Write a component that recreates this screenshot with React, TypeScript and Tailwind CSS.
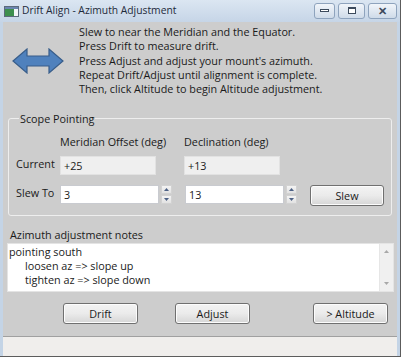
import React from 'react';

const font = { fontFamily: '"Open Sans", "Noto Sans", sans-serif' };

function Arrow() {
  return (
    <svg width="52" height="26" viewBox="0 0 52 26">
      <path
        d="M1 13 L15 1 L15 8 L37 8 L37 1 L51 13 L37 25 L37 18 L15 18 L15 25 Z"
        fill="#4f81bd"
        stroke="#385d8a"
        strokeWidth="1.2"
        strokeLinejoin="miter"
      />
    </svg>
  );
}

function WinButton({ w, children }: { w: string; children: React.ReactNode }) {
  return (
    <div className={`${w} h-[16px] rounded-[3px] border border-[#8ea3bd] bg-gradient-to-b from-[#f1f5fa] to-[#cfdbe9] flex items-center justify-center`}>
      {children}
    </div>
  );
}

function Spinner() {
  return (
    <div className="w-[11px] h-[19px] flex flex-col gap-[1px]">
      <div className="flex-1 bg-gradient-to-b from-[#f4f4f4] to-[#e2e2e2] border border-[#d2d2d2] flex items-center justify-center">
        <svg width="5" height="3" viewBox="0 0 5 3"><path d="M0 3 L2.5 0 L5 3 Z" fill="#4d6185" /></svg>
      </div>
      <div className="flex-1 bg-gradient-to-b from-[#f4f4f4] to-[#e2e2e2] border border-[#d2d2d2] flex items-center justify-center">
        <svg width="5" height="3" viewBox="0 0 5 3"><path d="M0 0 L2.5 3 L5 0 Z" fill="#4d6185" /></svg>
      </div>
    </div>
  );
}

function Btn({ label, w = 'w-[75px]' }: { label: string; w?: string }) {
  return (
    <div className={`${w} h-[21px] rounded-[3px] border border-[#707070] bg-gradient-to-b from-[#f3f3f3] via-[#ebebeb] to-[#d6d6d6] shadow-[inset_0_0_0_1px_#fcfcfc] flex items-center justify-center text-[10.8px] text-[#1a1a1a]`}>
      {label}
    </div>
  );
}

export default function App() {
  return (
    <div className="w-[403px] h-[358px] bg-white" style={font}>
      <div className="w-[401px] h-[357px] flex flex-col bg-[#c4d4e6] border-r border-b border-[#5c5c5c]">
        {/* title bar */}
        <div className="h-[22px] flex items-center bg-gradient-to-b from-[#dbe6f2] to-[#c6d5e7] pl-[4px] pr-[3px]">
          <svg width="15" height="11" viewBox="0 0 15 11">
            <rect x="0.5" y="0.5" width="14" height="10" fill="#f4f6f8" stroke="#5c6a7c" />
            <rect x="1" y="1" width="9" height="9" fill="#3e8f4e" />
            <rect x="1" y="1" width="13" height="2" fill="#6a86b0" />
          </svg>
          <span className="ml-[3px] text-[10.3px] text-[#1e2a3a]">Drift Align - Azimuth Adjustment</span>
          <div className="ml-auto flex gap-[3px] items-center -mt-[1px]">
            <WinButton w="w-[21px]">
              <div className="w-[9px] h-[3px] border border-[#3c4a5c] bg-white" />
            </WinButton>
            <WinButton w="w-[27px]">
              <div className="w-[8px] h-[7px] border border-[#3c4a5c] border-t-2 bg-white" />
            </WinButton>
            <WinButton w="w-[29px]">
              <span className="text-[11px] leading-none text-[#3c4a5c] font-bold">✕</span>
            </WinButton>
          </div>
        </div>

        {/* body */}
        <div className="flex-1 mx-[3px] flex flex-col bg-[#cdcdcd] text-[10.8px] text-[#1a1a1a]">
          <div className="flex items-center pt-[3px] pl-[9px]">
            <Arrow />
            <div className="ml-[15px] leading-[14.3px]">
              <div>Slew to near the Meridian and the Equator.</div>
              <div>Press Drift to measure drift.</div>
              <div>Press Adjust and adjust your mount's azimuth.</div>
              <div>Repeat Drift/Adjust until alignment is complete.</div>
              <div>Then, click Altitude to begin Altitude adjustment.</div>
            </div>
          </div>

          <fieldset className="mt-[15px] ml-[5px] w-[384px] border border-[#eeeeee] rounded-[3px] pl-[7px] pb-[9px]">
            <legend className="ml-[3px] px-[1px] leading-[15px]">Scope Pointing</legend>
            <div className="mt-[8px] flex leading-[15px]">
              <div className="w-[44px]" />
              <div className="w-[124px]">Meridian Offset (deg)</div>
              <div>Declination (deg)</div>
            </div>
            <div className="mt-[7px] flex items-start">
              <div className="w-[44px] leading-[15px]">Current</div>
              <div className="w-[96px] h-[19px] bg-[#efefef] border border-[#e2e2e2] flex items-center pl-[3px]">+25</div>
              <div className="w-[28px]" />
              <div className="w-[96px] h-[19px] bg-[#efefef] border border-[#e2e2e2] flex items-center pl-[3px]">+13</div>
            </div>
            <div className="mt-[10px] flex items-start">
              <div className="w-[44px] leading-[15px]">Slew To</div>
              <div className="w-[99px] h-[19px] bg-white border border-[#c9cbd0] flex items-center pl-[3px]">3</div>
              <div className="ml-[2px]"><Spinner /></div>
              <div className="ml-[13px] w-[99px] h-[19px] bg-white border border-[#c9cbd0] flex items-center pl-[3px]">13</div>
              <div className="ml-[2px]"><Spinner /></div>
              <div className="ml-[13px]"><Btn label="Slew" w="w-[74px]" /></div>
            </div>
          </fieldset>

          <div className="mt-[11px] ml-[7px] leading-[15px]">Azimuth adjustment notes</div>
          <div className="mt-[1px] ml-[4px] w-[387px] h-[49px] bg-white border border-[#e4e4e4] flex">
            <div className="flex-1 pl-[1px] pt-[1px] leading-[14px]">
              <div>pointing south</div>
              <div className="pl-[16px]">loosen az =&gt; slope up</div>
              <div className="pl-[16px]">tighten az =&gt; slope down</div>
            </div>
            <div className="w-[14px] bg-[#f0f0f0] border-l border-[#e6e6e6] flex flex-col justify-between items-center py-[6px]">
              <svg width="5" height="3" viewBox="0 0 5 3"><path d="M0 3 L2.5 0 L5 3 Z" fill="#a8a8a8" /></svg>
              <svg width="5" height="3" viewBox="0 0 5 3"><path d="M0 0 L2.5 3 L5 0 Z" fill="#a8a8a8" /></svg>
            </div>
          </div>

          <div className="mt-[11px] flex">
            <div className="ml-[60px]"><Btn label="Drift" /></div>
            <div className="ml-[37px]"><Btn label="Adjust" /></div>
            <div className="ml-[63px]"><Btn label="> Altitude" /></div>
          </div>

          <div className="mt-auto h-[20px] border-t border-[#a0a0a0] bg-[#f0eeec]" />
        </div>
      </div>
    </div>
  );
}
